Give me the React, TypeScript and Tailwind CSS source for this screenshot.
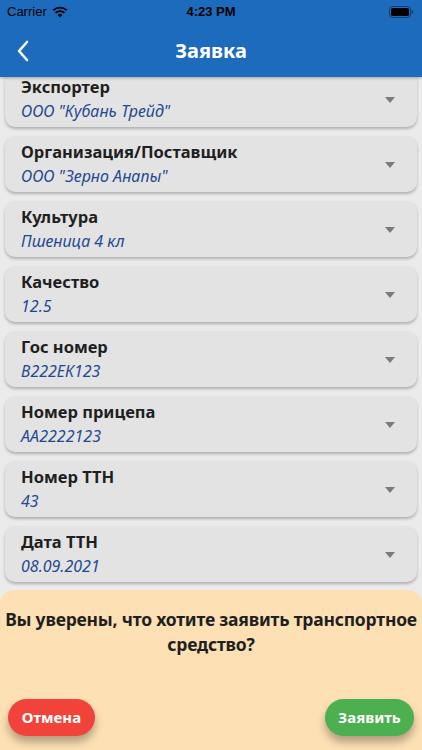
import React from "react";

const fields = [
  { label: "Экспортер", value: 'ООО "Кубань Трейд"' },
  { label: "Организация/Поставщик", value: 'ООО "Зерно Анапы"' },
  { label: "Культура", value: "Пшеница 4 кл" },
  { label: "Качество", value: "12.5" },
  { label: "Гос номер", value: "В222ЕК123" },
  { label: "Номер прицепа", value: "АА2222123" },
  { label: "Номер ТТН", value: "43" },
  { label: "Дата ТТН", value: "08.09.2021" },
];

function StatusBar() {
  return (
    <div className="h-[24px] flex items-center justify-between px-[7px] text-[13px] text-black" style={{ fontFamily: "'Liberation Sans', Arial, sans-serif" }}>
      <div className="flex items-center gap-[5px] w-[100px]">
        <span>Carrier</span>
        <svg width="16" height="12" viewBox="0 0 16 12">
          <path d="M8 11.5 L5.6 8.9 A3.4 3.4 0 0 1 10.4 8.9 Z" fill="#000" />
          <path d="M3.6 6.9 A6.3 6.3 0 0 1 12.4 6.9" stroke="#000" strokeWidth="1.9" fill="none" />
          <path d="M1.2 4.4 A9.8 9.8 0 0 1 14.8 4.4" stroke="#000" strokeWidth="1.9" fill="none" />
        </svg>
      </div>
      <span className="font-bold">4:23 PM</span>
      <div className="w-[100px] flex justify-end pr-[1px]">
        <svg width="25" height="12" viewBox="0 0 25 12">
          <rect x="0.5" y="0.5" width="21" height="11" rx="3" fill="none" stroke="#00000066" />
          <rect x="2" y="2" width="18" height="8" rx="1.6" fill="#000" />
          <rect x="22.5" y="4" width="1.6" height="4" rx="0.8" fill="#00000066" />
        </svg>
      </div>
    </div>
  );
}

function Field({ label, value }: { label: string; value: string }) {
  return (
    <div className="h-[56px] bg-[#e3e3e3] rounded-[10px] shadow-[0_2px_3px_rgba(0,0,0,0.25)] flex items-center pl-[16px] pr-[22px]">
      <div className="flex-1 flex flex-col pt-[2px]">
        <span className="text-[16.5px] leading-[22px] font-bold text-[#1f1f1f]">{label}</span>
        <span className="text-[16px] leading-[27px] italic text-[#1f4a91]">{value}</span>
      </div>
      <svg width="10" height="6" viewBox="0 0 10 6" className="mt-[1px]">
        <path d="M0 0 H10 L5 6 Z" fill="#7a7a7a" />
      </svg>
    </div>
  );
}

export default function App() {
  return (
    <div className="w-[422px] h-[750px] bg-[#ebebeb] flex flex-col overflow-hidden" style={{ fontFamily: "'Noto Sans', 'Open Sans', sans-serif" }}>
      <div className="bg-[#1c6bbc] z-10 shadow-[0_1px_3px_rgba(0,0,0,0.3)]">
        <StatusBar />
        <div className="h-[53px] flex items-center relative">
          <svg width="14" height="22" viewBox="0 0 14 22" className="ml-[16px]">
            <path d="M11 2 L3 11 L11 20" stroke="#fff" strokeWidth="2.6" fill="none" strokeLinecap="round" strokeLinejoin="round" />
          </svg>
          <span className="absolute inset-x-0 text-center text-white text-[20px] font-bold">Заявка</span>
        </div>
      </div>

      <div className="flex-1 overflow-hidden">
        <div className="flex flex-col gap-[9px] px-[5px] -mt-[6px]">
          {fields.map((f) => (
            <Field key={f.label} label={f.label} value={f.value} />
          ))}
        </div>
      </div>

      <div className="h-[160px] bg-[#fde0b4] rounded-t-[14px] flex flex-col">
        <p className="text-center text-[17.5px] leading-[25px] font-bold tracking-[-0.2px] text-[#1f1f1f] pt-[17px] px-[1px]">
          Вы уверены, что хотите заявить транспортное средство?
        </p>
        <div className="flex justify-between px-[8px] mt-auto mb-[14px]">
          <button className="w-[87px] h-[37px] rounded-full bg-[#f2433a] text-white text-[15px] font-bold shadow-[0_6px_8px_rgba(0,0,0,0.3)]">
            Отмена
          </button>
          <button className="w-[89px] h-[37px] rounded-full bg-[#4caf50] text-white text-[15px] font-bold shadow-[0_6px_8px_rgba(0,0,0,0.3)]">
            Заявить
          </button>
        </div>
      </div>
    </div>
  );
}
